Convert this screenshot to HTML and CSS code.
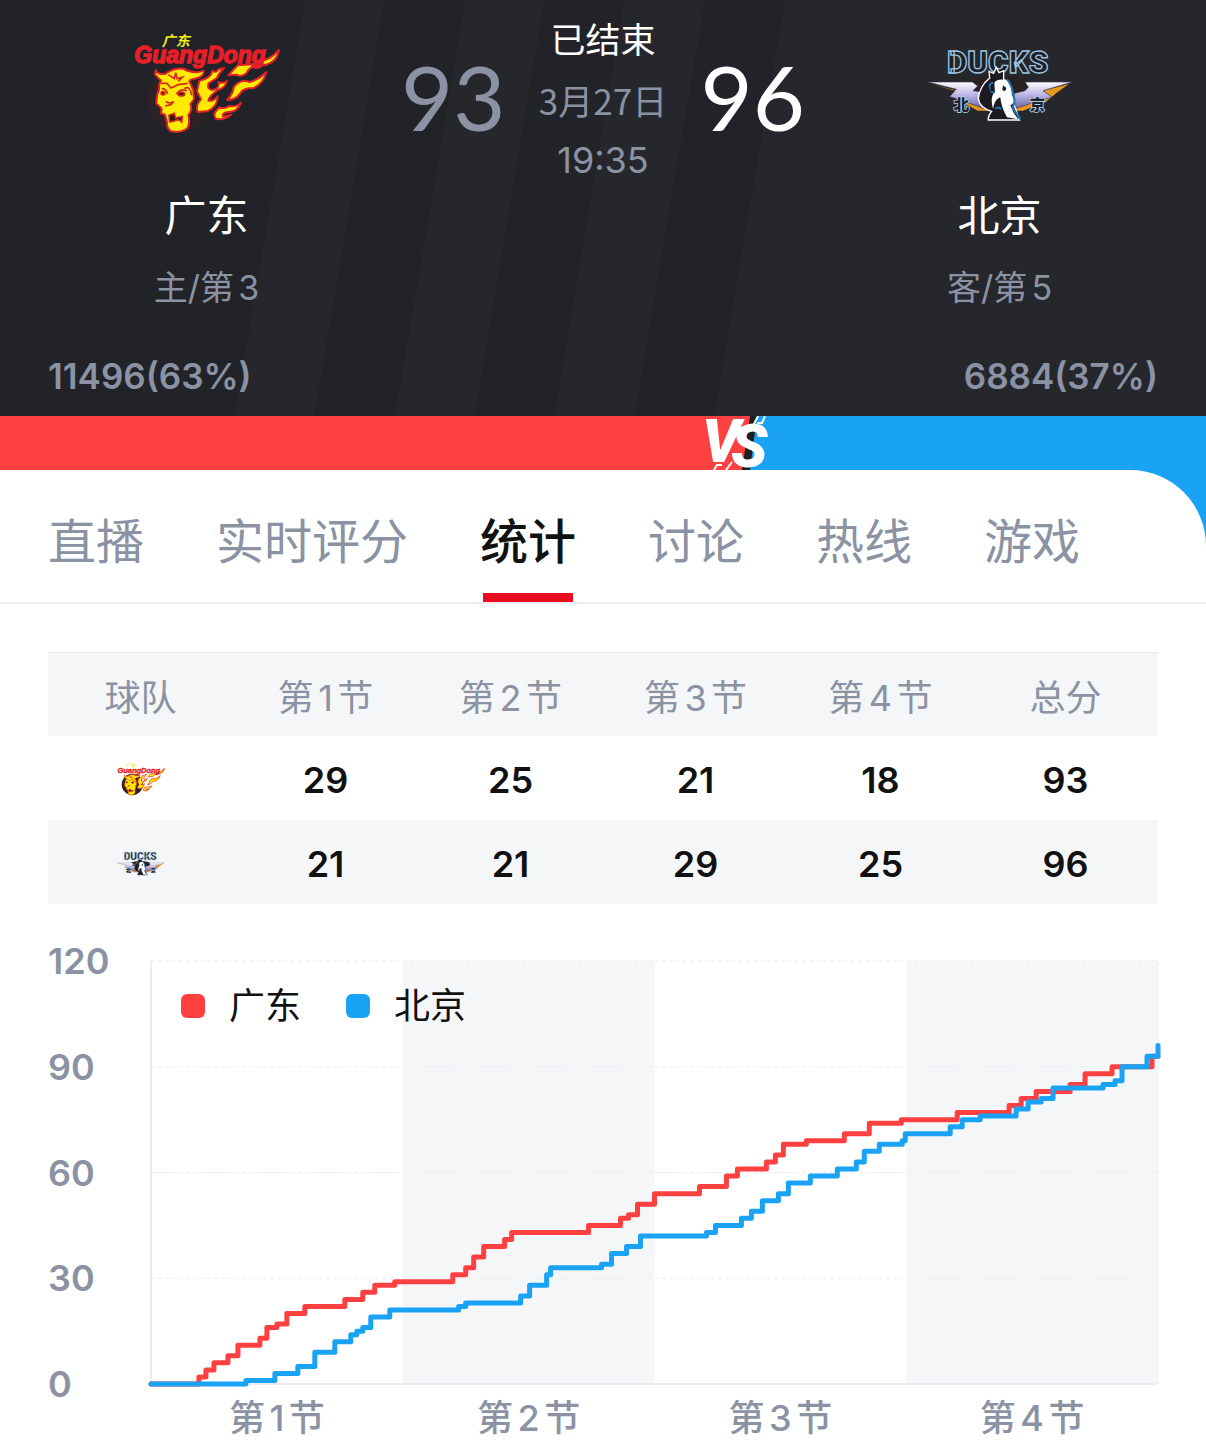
FILE: index.html
```html
<!DOCTYPE html>
<html lang="zh-CN">

<head>
    <meta charset="UTF-8">
    <meta name="viewport" content="width=device-width, initial-scale=1.0">
    <title>广东 93 - 96 北京</title>
    <link rel="stylesheet" href="styles.css">
</head>

<body>
    <!-- 球队 logo -->
    <svg class="defs" width="0" height="0" aria-hidden="true">
        <linearGradient id="wing" x1="0" y1="0" x2="0" y2="1">
            <stop offset="0" stop-color="#fff" />
            <stop offset="0.5" stop-color="#b9b2e4" />
            <stop offset="1" stop-color="#6a63a8" />
        </linearGradient>
        <symbol id="logo-gd" viewBox="18 12 480 360">
            <circle class="gd-ball" cx="178" cy="238" r="98" />
            <text class="gd-cn" x="122" y="77">广东</text>
            <g class="gd-fire">
                <path d="M104 150Q112 166 134 161Q158 144 187 146Q216 164 248 152Q252 168 222 176Q206 178 205 184L217 210L219 238L208 252Q216 268 202 286Q208 306 200 324Q182 340 150 334Q136 324 138 306L132 284L120 280L122 266L106 250L108 226L114 208Q112 194 120 182L102 164Z" />
                <path d="M235 182Q270 176 274 152Q286 160 292 148L310 144Q294 158 288 174L262 190Q258 210 274 210Q298 206 292 186Q306 192 318 182Q314 204 290 210Q264 228 262 242Q280 244 290 228Q290 262 258 274L230 276Q222 256 240 238L228 214Z" />
                <path d="M322 166Q336 150 350 136L436 130Q452 116 472 92Q468 124 436 134L414 134Q384 140 378 158Q362 174 345 164Z" />
                <path d="M318 240Q336 222 338 202Q356 176 386 186Q418 176 436 156Q428 190 398 204Q364 204 358 220Q344 240 318 240Z" />
                <path d="M296 262Q310 268 324 258Q346 262 360 248Q350 276 322 276Q300 280 306 290L330 284Q312 302 284 296Q272 280 296 262Z" />
                <path d="M420 122Q446 120 474 90Q468 124 436 134L414 134Z" />
            </g>
            <g class="gd-face">
                <path d="M142 164L160 176L164 158L168 176L184 172L172 184M122 206Q134 204 140 222M166 222Q180 204 198 212M120 190L138 190L150 204L172 194L200 190M134 244Q146 254 158 244L150 254L132 258M190 206Q206 194 212 226" />
                <path d="M144 286L160 280L164 294L184 290L182 306Q172 294 158 304L146 306Z" />
                <ellipse cx="181" cy="222" rx="10" ry="6" />
                <ellipse cx="126" cy="220" rx="6" ry="5" />
            </g>
            <text class="gd-word" x="40" y="128">GuangDong</text>
        </symbol>
        <symbol id="logo-bj" viewBox="27 -18 480 360">
            <ellipse class="bj-back" cx="262" cy="170" rx="100" ry="32" />
            <path class="bj-gold" d="M66 164L132 182L128 202L200 242H336L404 216L440 186L474 162L350 194L180 192Z" />
            <path class="bj-wing" d="M50 156H184L200 168L186 182L212 186L220 236L148 210L116 200L136 178Z" />
            <path class="bj-wing" d="M484 156H342L352 172L342 182L310 190L312 236L396 208L424 202L396 182Z" />
            <text class="bj-word" x="108" y="130">DUCKS</text>
            <path class="bj-head" d="M202 206Q206 168 236 144L234 124L248 130L256 112L264 128L278 122V148L292 156Q304 188 306 216L326 270H232Q230 258 242 244Q206 234 202 206Z" />
            <path class="bj-face" d="M250 158Q260 144 286 150Q300 166 300 192Q316 218 298 226Q306 250 322 268L288 262Q270 230 268 202Q252 206 246 236Q236 200 252 186Z" />
            <path class="bj-blue" d="M288 148Q304 166 306 196Q316 214 304 232L328 268M240 180Q230 160 246 158M252 236L264 232L270 238M238 184L250 188" />
            <path class="bj-eye" d="M276 166L286 174L282 184L274 180ZM238 168L248 178L240 184Z" />
            <text class="bj-cn" x="128" y="240">北</text>
            <text class="bj-cn" x="356" y="240">京</text>
        </symbol>
    </svg>

    <header class="match">
        <div class="board">
            <div class="team">
                <svg class="logo" role="img" aria-label="广东"><use href="#logo-gd" /></svg>
                <h2>广东</h2>
                <p>主/第3</p>
            </div>
            <div class="result">
                <span class="score">93</span>
                <div class="info">
                    <p class="status">已结束</p>
                    <p class="date">3月27日</p>
                    <p>19:35</p>
                </div>
                <span class="score win">96</span>
            </div>
            <div class="team">
                <svg class="logo" role="img" aria-label="北京"><use href="#logo-bj" /></svg>
                <h2>北京</h2>
                <p>客/第5</p>
            </div>
        </div>
        <div class="votes">
            <span>11496(63%)</span>
            <span>6884(37%)</span>
        </div>
    </header>

    <div class="vs-bar">
        <div class="vs-home" style="width: 63%">
            <svg class="vs" viewBox="0 0 80 54" role="img" aria-label="VS">
                <path class="vs-blue" d="M56 0H80V54H49Z" />
                <path class="vs-gap" d="M50 0H57L50 54H42Z" />
                <text x="2" y="46">V</text>
                <text x="31" y="51">S</text>
                <path class="vs-line" d="M32 46L26 54M22 49H17L14 54M58 0L52 12M65 0L62 7H57" />
            </svg>
        </div>
    </div>

    <main>
        <nav class="tabs">
            <a href="#live">直播</a>
            <a href="#rating">实时评分</a>
            <a href="#stats" class="active">统计</a>
            <a href="#talk">讨论</a>
            <a href="#hotline">热线</a>
            <a href="#game">游戏</a>
        </nav>

        <section class="stats" id="stats">
            <table>
                <thead>
                    <tr>
                        <th>球队</th>
                        <th>第1节</th>
                        <th>第2节</th>
                        <th>第3节</th>
                        <th>第4节</th>
                        <th>总分</th>
                    </tr>
                </thead>
                <tbody>
                    <tr>
                        <td><svg class="logo-s" role="img" aria-label="广东"><use href="#logo-gd" /></svg></td>
                        <td>29</td>
                        <td>25</td>
                        <td>21</td>
                        <td>18</td>
                        <td>93</td>
                    </tr>
                    <tr>
                        <td><svg class="logo-s" role="img" aria-label="北京"><use href="#logo-bj" /></svg></td>
                        <td>21</td>
                        <td>21</td>
                        <td>29</td>
                        <td>25</td>
                        <td>96</td>
                    </tr>
                </tbody>
            </table>

            <div class="chart">
                <div class="y-axis">
                    <span>120</span>
                    <span>90</span>
                    <span>60</span>
                    <span>30</span>
                    <span>0</span>
                </div>
                <div class="plot">
                    <svg class="lines" viewBox="0 0 1008 120" preserveAspectRatio="none">
                        <path class="band" d="M252 0H504V120H252ZM756 0H1008V120H756Z" />
                        <path class="grid" d="M0 0H1008M0 30H1008M0 60H1008M0 90H1008M1008 0V120" />
                        <path class="axis" d="M0 0V120H1008" />
                        <path class="line red" id="line-gd" />
                        <path class="line blue" id="line-bj" />
                    </svg>
                    <div class="legend">
                        <i class="red"></i><span>广东</span>
                        <i class="blue"></i><span>北京</span>
                    </div>
                </div>
                <div class="x-axis">
                    <span>第1节</span>
                    <span>第2节</span>
                    <span>第3节</span>
                    <span>第4节</span>
                </div>
            </div>
        </section>
    </main>

    <script>
        // [时间, 得分]，每节宽 252
        var gd = [[48, 2], [55, 4], [63, 6], [77, 8], [87, 11], [109, 13], [116, 16], [126, 17], [136, 20], [154, 22], [194, 24], [212, 26], [224, 28], [244, 29],
            [302, 31], [315, 33], [323, 36], [333, 39], [354, 41], [361, 43], [438, 45], [470, 47], [478, 48], [487, 51], [504, 54],
            [549, 56], [576, 59], [587, 61], [616, 63], [625, 65], [633, 68], [656, 69], [694, 71], [719, 74], [751, 75],
            [807, 77], [859, 79], [871, 81], [886, 83], [920, 85], [935, 88], [962, 90], [1002, 93], [1008, 93]];
        var bj = [[95, 1], [124, 3], [147, 5], [164, 9], [184, 12], [200, 14], [206, 15], [212, 16], [220, 19], [239, 21],
            [308, 22], [315, 23], [370, 25], [379, 28], [396, 31], [400, 33], [451, 34], [461, 37], [476, 39], [490, 42],
            [556, 43], [565, 45], [591, 47], [601, 49], [612, 52], [628, 54], [638, 57], [660, 59], [687, 61], [706, 63], [714, 66], [729, 68], [752, 69],
            [755, 71], [800, 73], [812, 75], [830, 76], [866, 78], [878, 80], [891, 81], [903, 84], [953, 85], [965, 86], [972, 90], [997, 93], [1008, 96]];

        function draw(id, list) {
            var d = 'M0 120';
            for (var i = 0; i < list.length; i++) {
                d += 'H' + list[i][0] + 'V' + (120 - list[i][1]);
            }
            document.getElementById(id).setAttribute('d', d);
        }

        draw('line-gd', gd);
        draw('line-bj', bj);
    </script>
</body>

</html>
```
FILE: styles.css
```css
* {
    margin: 0;
    padding: 0;
    box-sizing: border-box;
}

body {
    font-family: Inter, "Noto Sans CJK SC", sans-serif;
    font-size: 36px;
    color: #111;
    background: #fff;
    text-autospace: normal;
}

.defs {
    display: block;
}

/* 比分 */
.match {
    color: #8a92a3;
    background: linear-gradient(99.6deg, #222328 301px, #26272c 301px 379px, #222328 379px 459px, #26272c 459px 537px, #222328 537px 616px, #26272c 616px 695px, #222328 695px 774px, #26272c 774px);
}

.board {
    display: grid;
    grid-template-columns: 1fr 404px 1fr;
    padding: 0 12px;
}

.team {
    padding-top: 24px;
    text-align: center;
}

.logo {
    display: block;
    width: 160px;
    height: 120px;
    margin: 0 auto 42px;
}

.team h2 {
    font-size: 42px;
    font-weight: 400;
    line-height: 60px;
    color: #fff;
}

.team p {
    margin-top: 22px;
    font-size: 34px;
    line-height: 40px;
}

.result {
    display: flex;
    justify-content: space-between;
    padding-top: 10px;
    text-align: center;
}

.score {
    font-family: Lato, sans-serif;
    font-size: 90px;
    line-height: 172px;
}

.info p {
    line-height: 60px;
}

.info .status {
    font-size: 35px;
    color: #fff;
}

.info .date {
    font-family: "Noto Sans CJK SC", sans-serif;
    font-size: 35px;
    text-autospace: no-autospace;
}

.win {
    color: #fff;
}

.votes {
    display: flex;
    justify-content: space-between;
    padding: 48px 48px 20px;
    font-size: 35px;
    font-weight: 600;
    line-height: 40px;
}

.vs-bar {
    background: #1aa3f5;
}

.vs-home {
    display: flex;
    justify-content: flex-end;
    height: 54px;
    background: #ff4041;
}

.vs {
    width: 80px;
    height: 54px;
    margin-right: -20px;
}

.vs text {
    font-family: Roboto, sans-serif;
    font-size: 60px;
    font-weight: 900;
    font-style: italic;
    fill: #fff;
}

.vs-blue {
    fill: #1aa3f5;
}

.vs-gap {
    fill: #1d1d22;
}

.vs-line {
    fill: none;
    stroke: #fff;
    stroke-width: 2;
}

/* 标签 */
main {
    background: linear-gradient(#1aa3f5 100px, #fff 100px);
}

.tabs {
    display: flex;
    gap: 72px;
    height: 134px;
    padding: 0 48px;
    background: #fff;
    border-bottom: 2px solid #ebecf2;
    border-top-right-radius: 76px;
}

.tabs a {
    display: flex;
    flex-direction: column;
    justify-content: space-between;
    align-items: center;
    font-size: 48px;
    line-height: 72px;
    padding-top: 36px;
    color: #8a92a3;
    text-decoration: none;
    white-space: nowrap;
}

.tabs .active {
    font-weight: 500;
    color: #111;
}

.tabs .active::after {
    content: "";
    width: 90px;
    height: 9px;
    background: #ea0d20;
}

.stats {
    padding: 48px 48px 12px;
}

table {
    width: 100%;
    table-layout: fixed;
    border-collapse: separate;
    border-spacing: 0;
}

th,
td {
    height: 84px;
    text-align: center;
    vertical-align: middle;
    font-weight: 600;
}

td {
    padding-top: 3px;
}

th {
    font-weight: 400;
    color: #8a92a3;
    border-top: 1px solid #e8eaf4;
}

thead tr,
tbody tr:nth-child(2) {
    background: #f5f6f8;
}

.logo-s {
    display: block;
    width: 52px;
    height: 39px;
    margin: 0 auto;
}

/* 走势图 */
.chart {
    display: grid;
    grid-template-columns: 103px 1fr;
    margin-top: 36px;
}

.y-axis {
    display: flex;
    flex-direction: column;
    justify-content: space-between;
    font-weight: 600;
    line-height: 42px;
    color: #8a92a3;
}

.plot {
    position: relative;
    padding: 21px 0;
}

.lines {
    display: block;
    width: 100%;
    height: 423px;
    overflow: visible;
}

.lines path {
    vector-effect: non-scaling-stroke;
}

.band {
    fill: #f5f6f8;
}

.grid,
.axis {
    fill: none;
    stroke: #ebecf0;
    stroke-width: 2;
}

.grid {
    stroke-width: 1;
    stroke-dasharray: 4 3;
}

.line {
    fill: none;
    stroke-width: 5;
    stroke-linejoin: round;
    stroke-linecap: round;
}

.line.red {
    stroke: #ff4041;
}

.line.blue {
    stroke: #1aa3f5;
}

.legend {
    position: absolute;
    top: 39px;
    left: 30px;
    display: flex;
    align-items: center;
    line-height: 54px;
}

.legend i {
    width: 24px;
    height: 24px;
    margin-right: 24px;
    border-radius: 6px;
}

.legend span {
    margin-right: 45px;
}

.legend .red {
    background: #ff4041;
}

.legend .blue {
    background: #1aa3f5;
}

.x-axis {
    grid-column: 2;
    display: grid;
    grid-template-columns: repeat(4, 1fr);
    margin-top: -12px;
    line-height: 50px;
    font-weight: 500;
    text-align: center;
    color: #8a92a3;
}

/* logo 颜色 */
.gd-ball {
    fill: #2e2226;
}

.gd-cn {
    font-family: "Noto Sans CJK SC", sans-serif;
    font-size: 42px;
    font-style: italic;
    font-weight: 700;
    fill: #f4ee1c;
}

.gd-word {
    font-family: "Liberation Sans", sans-serif;
    font-size: 69px;
    font-style: italic;
    font-weight: 700;
    fill: #e61f29;
    stroke: #e61f29;
    stroke-width: 4;
}

.gd-fire {
    fill: #ffea00;
    stroke: #e0202a;
    stroke-width: 6;
    stroke-linejoin: round;
}

.gd-face {
    fill: #2e1a10;
    stroke: #d92720;
    stroke-width: 5;
}

.gd-face path:first-child {
    fill: none;
}

.bj-back {
    fill: #2a2022;
}

.bj-gold {
    fill: #e5971f;
}

.bj-wing {
    fill: url(#wing);
    stroke: #3b3550;
    stroke-width: 2;
}

.bj-head {
    fill: #1c1a20;
    stroke: #fff;
    stroke-width: 4;
}

.bj-face {
    fill: #fff;
}

.bj-blue {
    fill: none;
    stroke: #1d76b9;
    stroke-width: 6;
}

.bj-eye {
    fill: #15141a;
}

.bj-word {
    font-family: Roboto, sans-serif;
    font-size: 94px;
    font-weight: 900;
    fill: #1e1d22;
    stroke: #9cc4e4;
    stroke-width: 4;
}

.bj-cn {
    font-family: "Noto Sans CJK SC", sans-serif;
    font-size: 46px;
    font-weight: 900;
    fill: #20202a;
    stroke: #a8d0ea;
    stroke-width: 5;
    paint-order: stroke;
}
```
